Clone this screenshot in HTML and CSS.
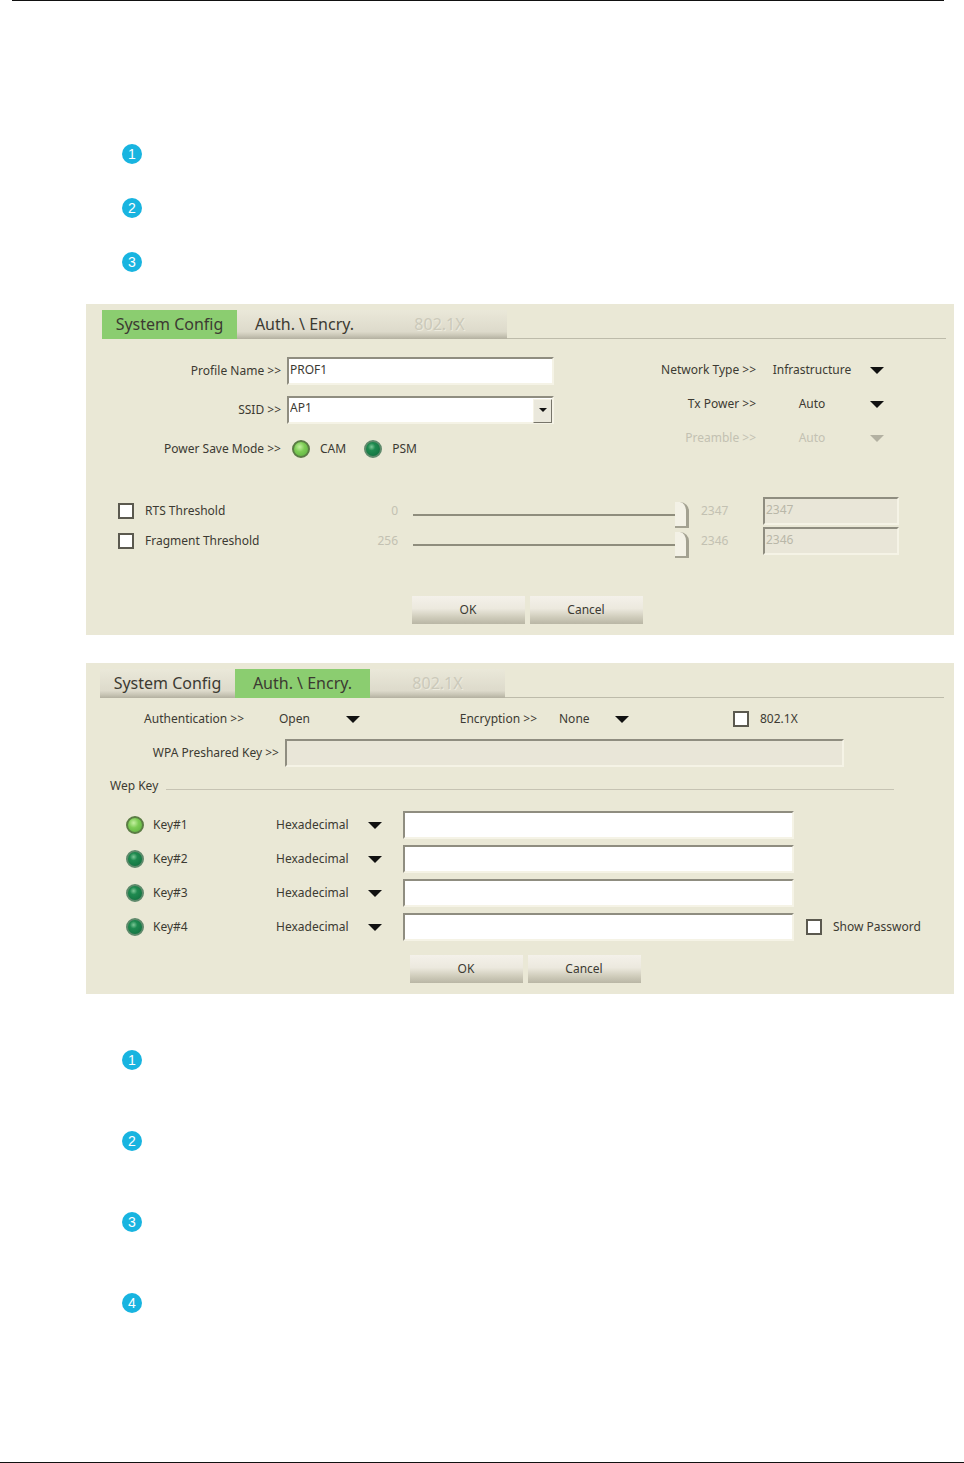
FILE: index.html
```html
<!DOCTYPE html>
<html lang="en">
<head>
    <meta charset="utf-8">
    <title>Wireless Profile Settings</title>
    <meta name="viewport" content="width=device-width, initial-scale=1">
    <link rel="stylesheet" href="styles.css">
</head>
<body>
    <hr class="rule-top">
    <ol class="steps">
        <li><span class="bullet">1</span></li>
        <li><span class="bullet">2</span></li>
        <li><span class="bullet">3</span></li>
    </ol>

    <form class="panel">
        <nav class="tabs">
            <button type="button" class="tab active">System Config</button>
            <button type="button" class="tab">Auth. \ Encry.</button>
            <button type="button" class="tab" disabled>802.1X</button>
        </nav>

        <div class="profile">
            <div class="profile-main">
                <div class="field">
                    <label for="profile-name">Profile Name &gt;&gt;</label>
                    <input type="text" class="box" id="profile-name" value="PROF1">
                </div>
                <div class="field">
                    <label for="ssid">SSID &gt;&gt;</label>
                    <span class="combo">
                        <select class="box" id="ssid"><option>AP1</option></select>
                    </span>
                </div>
                <div class="field" role="radiogroup" aria-labelledby="power-label">
                    <span class="field-label" id="power-label">Power Save Mode &gt;&gt;</span>
                    <div class="radios">
                        <label><input type="radio" name="power" checked>CAM</label>
                        <label><input type="radio" name="power">PSM</label>
                    </div>
                </div>
            </div>

            <div class="profile-side">
                <div class="field">
                    <label for="network">Network Type &gt;&gt;</label>
                    <span class="picker centered">
                        <select id="network"><option>Infrastructure</option></select>
                    </span>
                </div>
                <div class="field">
                    <label for="tx">Tx Power &gt;&gt;</label>
                    <span class="picker centered">
                        <select id="tx"><option>Auto</option></select>
                    </span>
                </div>
                <div class="field off">
                    <label for="preamble">Preamble &gt;&gt;</label>
                    <span class="picker centered">
                        <select id="preamble" disabled><option>Auto</option></select>
                    </span>
                </div>
            </div>
        </div>

        <div class="thresholds">
            <div class="threshold">
                <input type="checkbox" id="rts">
                <label for="rts">RTS Threshold</label>
                <span class="min">0</span>
                <input type="range" min="0" max="2347" value="2347" aria-label="RTS threshold" disabled>
                <span class="max">2347</span>
                <input type="text" class="box" value="2347" aria-label="RTS threshold value" disabled>
            </div>
            <div class="threshold">
                <input type="checkbox" id="fragment">
                <label for="fragment">Fragment Threshold</label>
                <span class="min">256</span>
                <input type="range" min="256" max="2346" value="2346" aria-label="Fragment threshold" disabled>
                <span class="max">2346</span>
                <input type="text" class="box" value="2346" aria-label="Fragment threshold value" disabled>
            </div>
        </div>

        <div class="actions">
            <button type="button">OK</button>
            <button type="button">Cancel</button>
        </div>
    </form>

    <form class="panel security">
        <nav class="tabs">
            <button type="button" class="tab">System Config</button>
            <button type="button" class="tab active">Auth. \ Encry.</button>
            <button type="button" class="tab" disabled>802.1X</button>
        </nav>

        <div class="auth">
            <label for="auth">Authentication &gt;&gt;</label>
            <span class="picker auth-type">
                <select id="auth"><option>Open</option></select>
            </span>
            <label for="encryption">Encryption &gt;&gt;</label>
            <span class="picker cipher">
                <select id="encryption"><option>None</option></select>
            </span>
            <span class="check">
                <input type="checkbox" id="dot1x">
                <label for="dot1x">802.1X</label>
            </span>
        </div>
        <div class="field psk">
            <label for="psk">WPA Preshared Key &gt;&gt;</label>
            <input type="text" class="box" id="psk" disabled>
        </div>

        <fieldset>
            <legend>Wep Key</legend>
            <div class="key">
                <input type="radio" name="key" id="key1" checked>
                <label for="key1">Key#1</label>
                <span class="picker">
                    <select aria-label="Key 1 format"><option>Hexadecimal</option></select>
                </span>
                <input type="text" class="box" aria-label="Key 1 value">
            </div>
            <div class="key">
                <input type="radio" name="key" id="key2">
                <label for="key2">Key#2</label>
                <span class="picker">
                    <select aria-label="Key 2 format"><option>Hexadecimal</option></select>
                </span>
                <input type="text" class="box" aria-label="Key 2 value">
            </div>
            <div class="key">
                <input type="radio" name="key" id="key3">
                <label for="key3">Key#3</label>
                <span class="picker">
                    <select aria-label="Key 3 format"><option>Hexadecimal</option></select>
                </span>
                <input type="text" class="box" aria-label="Key 3 value">
            </div>
            <div class="key">
                <input type="radio" name="key" id="key4">
                <label for="key4">Key#4</label>
                <span class="picker">
                    <select aria-label="Key 4 format"><option>Hexadecimal</option></select>
                </span>
                <input type="text" class="box" aria-label="Key 4 value">
                <span class="check">
                    <input type="checkbox" id="show">
                    <label for="show">Show Password</label>
                </span>
            </div>
        </fieldset>

        <div class="actions">
            <button type="button">OK</button>
            <button type="button">Cancel</button>
        </div>
    </form>

    <ol class="steps wide">
        <li><span class="bullet">1</span></li>
        <li><span class="bullet">2</span></li>
        <li><span class="bullet">3</span></li>
        <li><span class="bullet">4</span></li>
    </ol>
    <hr class="rule-bottom">
</body>
</html>
```

FILE: styles.css
```css
* {
    box-sizing: border-box;
}
body {
    margin: 0;
    min-height: 100vh;
    display: flex;
    flex-direction: column;
    background-color: #fff;
    color: #3c3a32;
    font: 12px/18px "Noto Sans", sans-serif;
}
input, select, button {
    margin: 0;
    font: inherit;
    color: inherit;
}
hr {
    width: auto;
    height: 1px;
    border: none;
    background-color: #111;
}
.rule-top {
    margin: 0 20px 0 12px;
}
.rule-bottom {
    margin: auto 0 0;
}

/* numbered steps */
.steps {
    list-style: none;
    margin: 126px 0 15px;
    padding: 0 122px;
}
.steps li {
    display: flex;
    align-items: center;
    height: 54px;
}
.steps.wide {
    margin: 25px 0 0;
}
.steps.wide li {
    height: 81px;
}
.bullet {
    width: 20px;
    height: 20px;
    border-radius: 50%;
    background-color: #18b4e0;
    color: #fff;
    font: 14px/20px "Liberation Sans", sans-serif;
    text-align: center;
}

.panel {
    margin: 0 10px 0 86px;
    padding: 6px 0 11px;
    background-color: #eae8d6;
}
.security {
    margin-top: 28px;
}

/* tabs */
.tabs {
    display: flex;
    padding: 0 8px 0 16px;
}
.security .tabs {
    padding: 0 10px 0 14px;
}
.tabs::after {
    content: "";
    flex: 1;
    border-bottom: 1px solid #bdbbaa;
}
.tab {
    width: 135px;
    height: 29px;
    padding: 0;
    border: none;
    background: linear-gradient(#eae8d9, #dddacb 75%, #c9c6b6 88%, #b3b0a0);
    font-size: 16px;
    line-height: 29px;
}
.tab.active {
    background: #8bcd70;
}
.tab:disabled {
    color: #cbc9ba;
    text-shadow: 1px 1px #eceadd;
}

/* text boxes with a sunken edge */
.box {
    width: 100%;
    height: 28px;
    padding: 0 1px 4px;
    border: 2px solid;
    border-color: #8f8d80 #f5f3e6 #f5f3e6 #8f8d80;
    border-radius: 0;
    background-color: #fff;
    outline: none;
}
.box:disabled {
    background-color: #e9e6d8;
    color: #b9b7a8;
}
select {
    width: 100%;
    height: 22px;
    border: none;
    background: none;
    appearance: none;
    opacity: 1;
}

.field {
    display: flex;
    align-items: center;
    gap: 6px;
}
.profile {
    display: flex;
}
.profile-main {
    flex: 1;
    display: flex;
    flex-direction: column;
    gap: 11px;
    padding-top: 18px;
}
.profile-main .field {
    height: 28px;
}
.profile-main .field > label,
.field-label {
    flex: none;
    width: 195px;
    text-align: right;
}
.profile-side {
    width: 400px;
    display: flex;
    flex-direction: column;
    gap: 12px;
    padding: 20px 68px 0 0;
}
.profile-side .field {
    gap: 12px;
    justify-content: flex-end;
}
.profile-side .picker {
    width: 118px;
}
.off {
    color: #c3c1b2;
}

/* select with a plain triangle */
.picker, .combo {
    position: relative;
    display: block;
}
.picker::after, .combo::after {
    content: "";
    position: absolute;
    top: 8px;
    right: 2px;
    border: 7px solid transparent;
    border-top-color: #111;
    border-bottom: none;
    pointer-events: none;
}
.off .picker::after {
    border-top-color: #b3b1a2;
}
.picker select {
    padding: 0 24px 0 3px;
}
.centered select {
    padding: 0 30px 0 0;
    text-align: center;
    text-align-last: center;
}
.off select:disabled {
    color: #c3c1b2;
}
.combo {
    flex: 1;
}
.combo::before {
    content: "";
    position: absolute;
    top: 3px;
    right: 2px;
    width: 17px;
    height: 22px;
    border: 1px solid;
    border-color: #f5f3e6 #77756a #77756a #f5f3e6;
    background-color: #eae8dc;
    pointer-events: none;
}
.combo::after {
    top: 12px;
    right: 7px;
    border-width: 4px 4px 0;
}

/* radios and tick boxes */
.radios {
    display: flex;
    gap: 18px;
    padding-left: 5px;
}
.radios label {
    display: flex;
    align-items: center;
    gap: 10px;
}
input[type="radio"] {
    flex: none;
    width: 18px;
    height: 18px;
    border: 2px solid #5f8a6c;
    border-radius: 50%;
    background: radial-gradient(circle at 40% 35%, #7cc796 0, #1f8a50 30%, #0f6b3c);
    appearance: none;
}
input[type="radio"]:checked {
    border-color: #5b7c45;
    background: radial-gradient(circle at 40% 35%, #c4f0a0 0, #7dcc55 40%, #57ab3c);
}
input[type="checkbox"] {
    flex: none;
    width: 16px;
    height: 16px;
    border: 2px solid #5b594f;
    background-color: #fff;
    appearance: none;
}
.check {
    display: flex;
    align-items: center;
    gap: 11px;
}

/* threshold sliders */
.thresholds {
    display: flex;
    flex-direction: column;
    gap: 2px;
    margin-top: 34px;
}
.threshold {
    display: flex;
    align-items: center;
    height: 28px;
    padding: 0 55px 0 32px;
}
.threshold label {
    width: 180px;
    margin-left: 11px;
}
.min, .max {
    color: #c3c1b2;
}
.min {
    width: 73px;
    text-align: right;
}
.max {
    width: 74px;
    padding-left: 12px;
}
.threshold .box {
    flex: none;
    width: 136px;
}
input[type="range"] {
    flex: 1;
    min-width: 0;
    height: 26px;
    margin: 8px 0 0 15px;
    background: linear-gradient(#8f8d7d, #8f8d7d) center / 100% 2px no-repeat;
    appearance: none;
}
input[type="range"]::-webkit-slider-thumb {
    width: 14px;
    height: 26px;
    border: solid #a3a191;
    border-width: 0 3px 2px 0;
    border-radius: 0 9px 0 0;
    background-color: #f3f1e6;
    appearance: none;
}

/* OK and Cancel */
.actions {
    display: flex;
    justify-content: center;
    gap: 5px;
    margin-top: 41px;
    padding-left: 14px;
}
.security .actions {
    margin-top: 14px;
    padding-left: 10px;
}
.actions button {
    width: 113px;
    height: 28px;
    border: none;
    background: linear-gradient(#f4f1ea, #ece9de 45%, #d0cdbc 75%, #b9b6a5);
}

/* authentication tab */
.auth {
    display: grid;
    grid-template-columns: 158px 118px 175px 94px 1fr;
    align-items: center;
    margin-top: 10px;
}
.auth > label {
    text-align: right;
}
.auth-type {
    padding-left: 32px;
}
.cipher {
    padding-left: 19px;
}
.auth .check {
    padding-left: 102px;
}
.psk {
    margin: 9px 110px 0 0;
}
.psk label {
    flex: none;
    width: 193px;
    text-align: right;
}
fieldset {
    display: flex;
    flex-direction: column;
    gap: 6px;
    margin: 10px 0 0;
    padding: 0;
    border: none;
}
legend {
    display: flex;
    align-items: center;
    gap: 8px;
    width: 100%;
    margin-bottom: 16px;
    padding: 0 60px 0 24px;
}
legend::after {
    content: "";
    flex: 1;
    margin-top: 6px;
    border-top: 1px solid #c6c3b3;
}
.key {
    display: grid;
    grid-template-columns: 18px 129px 111px 1fr 160px;
    align-items: center;
    padding-left: 40px;
}
.key > label {
    padding-left: 9px;
}
.key .box {
    width: auto;
    margin-left: 19px;
}
.key .check {
    padding-left: 12px;
}
```
